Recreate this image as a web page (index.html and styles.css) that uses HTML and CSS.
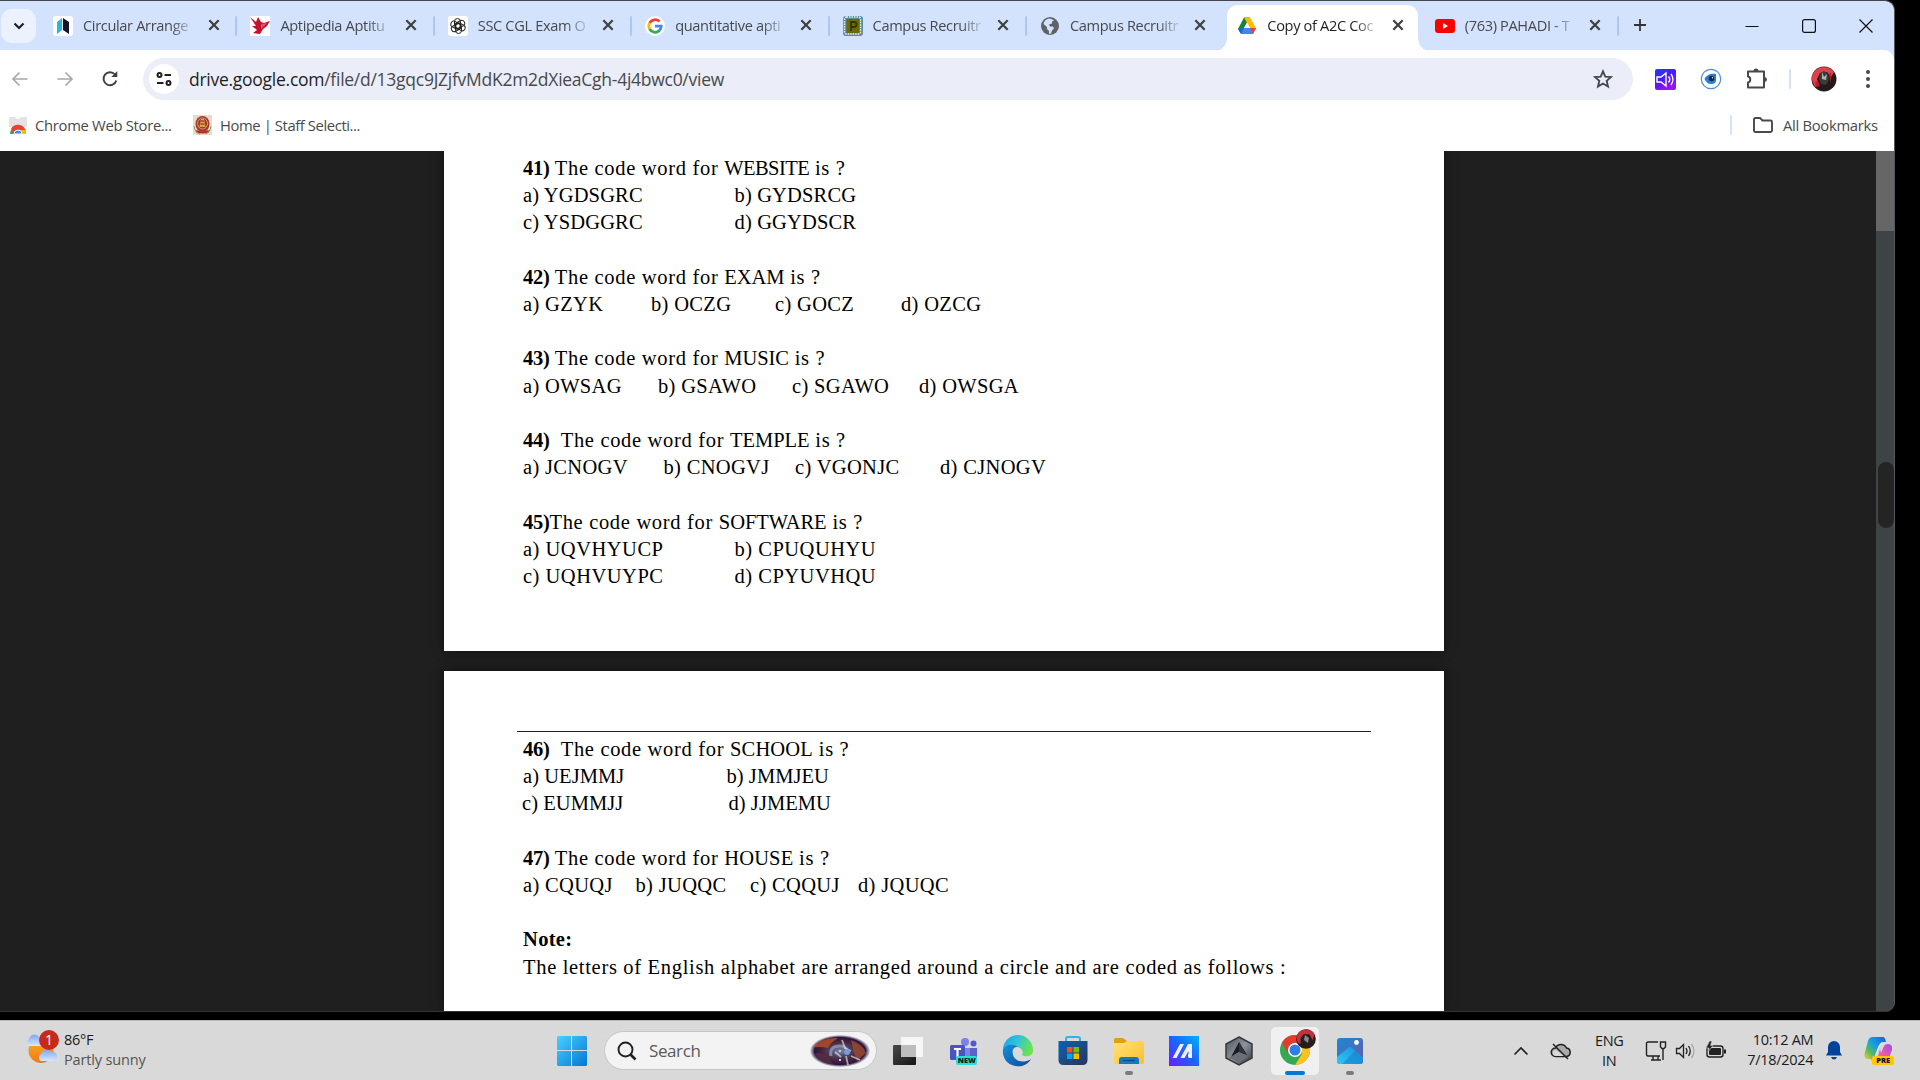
FILE: index.html
```html
<!DOCTYPE html>
<html lang="en">
<head>
<meta charset="utf-8">
<title>Copy of A2C Coding</title>
<link rel="stylesheet" href="styles.css">
</head>
<body>
<svg class="defs" width="0" height="0">
  <defs>
    <symbol id="x" viewBox="0 0 12 12"><path d="M2 2l8 8M10 2l-8 8" stroke="currentColor" stroke-width="1.9" fill="none"/></symbol>
    <linearGradient id="win" x1="0" y1="0" x2="1" y2="1"><stop offset="0" stop-color="#4cd0ff"/><stop offset="1" stop-color="#0078d4"/></linearGradient>
    <linearGradient id="photo" x1="0" y1="0" x2="1" y2="1"><stop offset="0" stop-color="#188ad6"/><stop offset="1" stop-color="#6a58a8"/></linearGradient>
    <linearGradient id="mount" x1="0" y1="1" x2="1" y2="0"><stop offset="0" stop-color="#30c8f4"/><stop offset="1" stop-color="#168ee0"/></linearGradient>
    <linearGradient id="store" x1="0" y1="0" x2="1" y2="1"><stop offset="0" stop-color="#0b62b4"/><stop offset="1" stop-color="#2a3557"/></linearGradient>
    <linearGradient id="asus" x1="0" y1="1" x2="1" y2="0"><stop offset="0" stop-color="#6a1cff"/><stop offset=".5" stop-color="#1c62ff"/><stop offset="1" stop-color="#00b2ff"/></linearGradient>
    <linearGradient id="snd" x1="0" y1="0" x2=".6" y2="1"><stop offset="0" stop-color="#1c3cff"/><stop offset=".5" stop-color="#4a1cf4"/><stop offset="1" stop-color="#a010f4"/></linearGradient>
    <linearGradient id="edgetop" x1="0" y1="0" x2="1" y2=".4"><stop offset="0" stop-color="#1c9fe0"/><stop offset=".5" stop-color="#30c4d8"/><stop offset="1" stop-color="#6ee44a"/></linearGradient>
    <linearGradient id="edgelow" x1="0" y1="0" x2="1" y2="1"><stop offset="0" stop-color="#1590de"/><stop offset="1" stop-color="#0d4a94"/></linearGradient>
    <linearGradient id="fold" x1="0" y1="0" x2="1" y2="1"><stop offset="0" stop-color="#ffe27a"/><stop offset="1" stop-color="#fcbf2a"/></linearGradient>
    <linearGradient id="sun" x1="0" y1="0" x2="0" y2="1"><stop offset="0" stop-color="#f7ae2c"/><stop offset="1" stop-color="#f07a16"/></linearGradient>
    <linearGradient id="cloud" x1="0" y1="0" x2="0" y2="1"><stop offset="0" stop-color="#7ea6ec"/><stop offset="1" stop-color="#d8e8ff"/></linearGradient>
    <linearGradient id="cop1" x1="1" y1="0" x2="0" y2="1"><stop offset="0" stop-color="#1560d8"/><stop offset=".45" stop-color="#16a0e0"/><stop offset=".7" stop-color="#52b868"/><stop offset="1" stop-color="#f4d020"/></linearGradient>
    <linearGradient id="cop2" x1="1" y1="0" x2="0" y2="1"><stop offset="0" stop-color="#a44cf0"/><stop offset=".5" stop-color="#ee58a4"/><stop offset="1" stop-color="#ff9650"/></linearGradient>
    <linearGradient id="dark" x1="0" y1="0" x2="1" y2="1"><stop offset="0" stop-color="#4a4a4a"/><stop offset="1" stop-color="#141414"/></linearGradient>
    <linearGradient id="steel" x1="0" y1="0" x2="1" y2="1"><stop offset="0" stop-color="#4c5158"/><stop offset=".5" stop-color="#8d949c"/><stop offset="1" stop-color="#2e3238"/></linearGradient>
    <radialGradient id="neb"><stop offset="0" stop-color="#7f8fb4"/><stop offset=".3" stop-color="#4c4a6c"/><stop offset=".6" stop-color="#47243a"/><stop offset=".85" stop-color="#2a1540"/><stop offset="1" stop-color="#4a3060" stop-opacity=".1"/></radialGradient>
  </defs>
</svg>

<div class="window">
  <header class="tabstrip">
    <button class="tabsearch"><svg width="12" height="10" viewBox="0 0 12 10"><path d="M1.500 2.500l4.500 4.500 4.500-4.500" fill="none" stroke="#1f1f1f" stroke-width="2.200"/></svg></button>
    <div class="tab"><svg class="fav" viewBox="0 0 20 20"><rect width="20" height="20" rx="3" fill="#fff"/><path d="M4 6l5-4v12l-5 4z" fill="#2bb8d6"/><path d="M10 2l6 4v12l-6-4z" fill="#15152a"/></svg><span class="title">Circular Arrange</span><svg class="close"><use href="#x"/></svg></div>
    <div class="tab"><svg class="fav" viewBox="0 0 20 20"><rect width="20" height="20" fill="#fff"/><path d="M0 1l6 5 2-5 3 5 3 1 6-2-3 5-4 3-3 5-7-1 4-3-5-4 4 0z" fill="#c8102e"/><path d="M11 8l6-1-6 6z" fill="#e0506a"/></svg><span class="title">Aptipedia Aptitu</span><svg class="close"><use href="#x"/></svg></div>
    <div class="tab"><svg class="fav" viewBox="0 0 20 20"><rect width="20" height="20" rx="3" fill="#fff"/><g fill="none" stroke="#222" stroke-width="1"><rect x="6.500" y="2.500" width="6" height="10" rx="3"/><rect x="6.500" y="2.500" width="6" height="10" rx="3" transform="rotate(60 10 10)"/><rect x="6.500" y="2.500" width="6" height="10" rx="3" transform="rotate(120 10 10)"/><rect x="6.500" y="2.500" width="6" height="10" rx="3" transform="rotate(180 10 10)"/><rect x="6.500" y="2.500" width="6" height="10" rx="3" transform="rotate(240 10 10)"/><rect x="6.500" y="2.500" width="6" height="10" rx="3" transform="rotate(300 10 10)"/></g></svg><span class="title">SSC CGL Exam O</span><svg class="close"><use href="#x"/></svg></div>
    <div class="tab"><svg class="fav" viewBox="0 0 20 20"><circle cx="10" cy="10" r="10" fill="#fff"/><g fill="none" stroke-width="2.800"><path d="M14.500 5.600A6.200 6.200 0 0 0 4.600 7" stroke="#ea4335"/><path d="M4.600 7a6.200 6.200 0 0 0 0 6" stroke="#fbbc05"/><path d="M4.600 13a6.200 6.200 0 0 0 9.800 1.500" stroke="#34a853"/><path d="M14.200 14.700c1.500-1.300 2-2.800 2-4.500H10" stroke="#4285f4"/></g></svg><span class="title">quantitative apti</span><svg class="close"><use href="#x"/></svg></div>
    <div class="tab"><svg class="fav" viewBox="0 0 20 20"><rect width="20" height="20" rx="3" fill="#5d8ba0"/><rect x="1.500" y="1" width="16" height="17" rx="2" fill="none" stroke="#e8f4f4" stroke-width="1.500" stroke-dasharray="1.500 1"/><rect x="3.500" y="3" width="13" height="14" fill="#6b6b00"/><path d="M8 15V6h3a2.500 2.500 0 0 1 0 5H8" fill="none" stroke="#343400" stroke-width="1.800"/></svg><span class="title">Campus Recruitr</span><svg class="close"><use href="#x"/></svg></div>
    <div class="tab noline"><svg class="fav" viewBox="0 0 20 20"><circle cx="10" cy="10" r="9" fill="#5f6368"/><path d="M9 2.500c2 0 4 1 5 2l-2 1v2l-3 1 1 2h3l1 2-2 2-1 3-2 .5v-3l-2-2V11L3.500 8C4 5 6 3 9 2.500z" fill="#d3e3fd"/><path d="M3 9l4 4" stroke="#5f6368"/></svg><span class="title">Campus Recruitr</span><svg class="close"><use href="#x"/></svg></div>
    <div class="tab active"><svg class="fav" viewBox="0 0 20 20"><path d="M7 1.500h6l-9 16L1 13z" fill="#188038"/><path d="M7 1.500h6L19 12h-6z" fill="#fcbc00"/><path d="M4.500 12H19l-3 6H4z" fill="#4285f4"/><path d="M19 12l-3 6-3-6z" fill="#ea4335"/><path d="M1 13l3 5 3-6z" fill="#1967d2"/><path d="M10 6.500l3 5.500H7z" fill="#fff"/></svg><span class="title">Copy of A2C Coc</span><svg class="close"><use href="#x"/></svg></div>
    <div class="tab"><svg class="fav" viewBox="0 0 20 20"><rect y="3" width="20" height="14" rx="3" fill="#f00"/><path d="M8 7l5 3-5 3z" fill="#fff"/></svg><span class="title">(763) PAHADI - T</span><svg class="close"><use href="#x"/></svg></div>
    <svg class="newtab" width="14" height="14"><path d="M7 1v12M1 7h12" stroke="#333" stroke-width="1.800"/></svg>
    <div class="controls">
      <svg width="16" height="16"><path d="M1.500 8.500h13" stroke="#111" stroke-width="1.200"/></svg>
      <svg width="16" height="16"><rect x="1.600" y="1.600" width="12.800" height="12.800" rx="2" fill="none" stroke="#111" stroke-width="1.200"/></svg>
      <svg width="16" height="16"><path d="M1.500 1.500l13 13M14.500 1.500l-13 13" stroke="#111" stroke-width="1.200"/></svg>
    </div>
  </header>

  <div class="chrome">
    <nav class="toolbar">
      <svg class="nav" viewBox="0 0 20 20"><path d="M17.500 10H3M9.500 3.500L3 10l6.500 6.500" fill="none" stroke="#a6a8aa" stroke-width="1.700"/></svg>
      <svg class="nav" viewBox="0 0 20 20"><path d="M2.500 10H17M10.500 3.500L17 10l-6.500 6.500" fill="none" stroke="#a6a8aa" stroke-width="1.700"/></svg>
      <svg class="nav" viewBox="0 0 20 20"><path d="M16.300 11.500A6.500 6.500 0 1 1 15 5.500l1 1.500" fill="none" stroke="#3f4042" stroke-width="1.900"/><path d="M17.300 2v6h-6z" fill="#3f4042"/></svg>
      <div class="omnibox">
        <span class="site"><svg width="18" height="16" viewBox="0 0 18 16"><g fill="none" stroke="#1f1f1f" stroke-width="2"><circle cx="4.500" cy="4" r="2"/><path d="M9.500 4h6.500M2 12h6.500"/><circle cx="13.500" cy="12" r="2"/></g></svg></span>
        <span class="url"><b>drive.google.com</b>/file/d/13gqc9JZjfvMdK2m2dXieaCgh-4j4bwc0/view</span>
        <svg class="star" width="20" height="20" viewBox="0 0 20 20"><path d="M10 2.300l2.300 5.300 5.700.5-4.300 3.800 1.300 5.600-5-3-5 3 1.300-5.600L2 8.100l5.700-.5z" fill="none" stroke="#47494c" stroke-width="1.900"/></svg>
      </div>
      <div class="extensions">
        <svg width="21" height="21" viewBox="0 0 21 21"><rect width="21" height="21" rx="2" fill="url(#snd)"/><g fill="none" stroke="#fff" stroke-width="1.400"><path d="M2 8h4l5-4v13l-5-4H2zM13.500 7.500q2.500 3 0 6M16 5q4 5.500 0 11"/></g></svg>
        <svg width="22" height="22" viewBox="0 0 22 22"><circle cx="11" cy="11" r="9.700" fill="#fff" stroke="#4a90e2" stroke-width="1.200"/><path d="M4.500 11C6 7 11 5 16 6v6c0 3-2 4-5 4s-5-2-6.500-5z" fill="#2b7fd6"/><circle cx="11.500" cy="10.500" r="2.800" fill="#14283c"/><circle cx="12.500" cy="9.800" r=".7" fill="#fff"/></svg>
        <svg width="22" height="22" viewBox="0 0 22 22"><path d="M2 3.500h16v16H2v-5c3-.5 3-5.500 0-6z" fill="none" stroke="#47494c" stroke-width="2" stroke-linejoin="round"/><path d="M7.500 3a2.500 2.500 0 0 1 5 0zM18.500 9a2.500 2.500 0 0 1 0 5z" fill="#47494c"/></svg>
      </div>
      <i class="bar"></i>
      <svg class="avatar" width="26" height="26" viewBox="0 0 26 26"><circle cx="13" cy="13" r="12.500" fill="#241a1c"/><path d="M.5 13A12.500 12.500 0 0 1 23 6l-3 5-4-5-7 1-3 6 2 6-4 2z" fill="#e0404a"/><path d="M9 7l4-2 4 3 1 6-3 5-5-1-2-5z" fill="#3a3a3a"/><path d="M11 6l2 5 3-3-1 6-4-1z" fill="#b5b5b5"/><path d="M4 16l3-1 2 5-4 1zM18 9l2-3v11z" fill="#c01c24"/></svg>
      <svg class="menu" width="6" height="20"><g fill="#47494c"><circle cx="3" cy="3" r="2"/><circle cx="3" cy="10" r="2"/><circle cx="3" cy="17" r="2"/></g></svg>
    </nav>
    <nav class="bookmarks">
      <svg width="18" height="17" viewBox="0 0 18 17"><path d="M0 0h18v10H0z" fill="#e3e3e3"/><path d="M6 0q3 4 6 0z" fill="#fff"/><path d="M1 17a8 8 0 0 1 16 0z" fill="#34a853"/><path d="M2 12A8 8 0 0 1 16 12l1 2-8-1-4 2z" fill="#ea4335"/><path d="M12 13h4.500q.8 2 .5 4h-5z" fill="#fbbc04"/><path d="M5 17a4 4 0 0 1 8 0z" fill="#4285f4" stroke="#fff"/></svg>
      <span class="bm one">Chrome Web Store...</span>
      <svg width="19" height="20" viewBox="0 0 19 20"><rect width="19" height="20" fill="#e6dccb"/><ellipse cx="9.500" cy="9" rx="7" ry="8" fill="#a33a2e"/><ellipse cx="9.500" cy="8.500" rx="5" ry="5.500" fill="none" stroke="#e3ab9a" stroke-width=".8"/><path d="M8 4h3l1.500 8h-6z" fill="#d9a441"/><path d="M8 6h3M7.500 9h4" stroke="#8a2318"/><path d="M3 16q6.500 3 13 0" fill="none" stroke="#c02a24" stroke-width="2"/><path d="M1 11q1 7 6 8M18 11q-1 7-6 8" fill="none" stroke="#8f9c5c"/></svg>
      <span class="bm two">Home | Staff Selecti...</span>
      <i class="bar"></i>
      <svg class="folder" width="20" height="16" viewBox="0 0 20 16"><path d="M1 2.500q0-1.500 1.500-1.500H7l2.500 2.500h8q1.500 0 1.500 1.500v8.500q0 1.500-1.500 1.500h-15Q1 15 1 13.500z" fill="none" stroke="#47494c" stroke-width="1.900"/></svg>
      <span class="bm all">All Bookmarks</span>
    </nav>
  </div>

  <main class="viewer">
    <div class="pages">
      <article class="page first">
        <section><p><b>41)</b> The code word for <i class="narrow">WEBSITE</i> is ?</p><div class="opts two"><span>a) YGDSGRC</span><span>b) GYDSRCG</span><span>c) YSDGGRC</span><span>d) GGYDSCR</span></div></section>
        <section><p><b>42)</b> The code word for <i>EXAM</i> is ?</p><div class="opts q42"><span>a) GZYK</span><span>b) OCZG</span><span>c) GOCZ</span><span>d) OZCG</span></div></section>
        <section><p><b>43)</b> The code word for <i>MUSIC</i> is ?</p><div class="opts q43"><span>a) OWSAG</span><span>b) GSAWO</span><span>c) SGAWO</span><span>d) OWSGA</span></div></section>
        <section><p><b>44)</b>&nbsp; The code word for <i>TEMPLE</i> is ?</p><div class="opts q44"><span>a) JCNOGV</span><span>b) CNOGVJ</span><span>c) VGONJC</span><span>d) CJNOGV</span></div></section>
        <section><p><b>45)</b>The code word for <i>SOFTWARE</i> is ?</p><div class="opts two wide"><span>a) UQVHYUCP</span><span>b) CPUQUHYU</span><span>c) UQHVUYPC</span><span>d) CPYUVHQU</span></div></section>
      </article>
      <article class="page second">
        <hr>
        <section><p><b>46)</b>&nbsp; The code word for <i class="loose">SCHOOL</i> is ?</p><div class="opts q46"><span>a) UEJMMJ</span><span>b) JMMJEU</span></div><div class="opts q46b"><span>c) EUMMJJ</span><span>d) JJMEMU</span></div></section>
        <section><p><b>47)</b> The code word for <i class="loose">HOUSE</i> is ?</p><div class="opts q47"><span>a) CQUQJ</span><span>b) JUQQC</span><span>c) CQQUJ</span><span>d) JQUQC</span></div></section>
        <section><p><b class="note">Note:</b></p><p>The letters of English alphabet are arranged around a circle and are coded as follows :</p></section>
      </article>
    </div>
    <div class="scroll"><i class="upper"></i><i class="thumb"></i></div>
  </main>
</div>

<footer class="taskbar">
  <div class="weather">
    <svg width="34" height="36" viewBox="0 0 34 36"><circle cx="16" cy="20.500" r="12.500" fill="url(#sun)"/><path d="M4 16a4 4 0 0 1 0-7 5.500 5.500 0 0 1 10-2 4.500 4.500 0 0 1 3 9z" fill="url(#cloud)"/><path d="M16 31a4 4 0 0 1 0-7 5.500 5.500 0 0 1 10-2 4.500 4.500 0 0 1 3 9z" fill="url(#cloud)"/></svg>
    <span class="badge">1</span>
    <div class="wtext"><span>86°F</span><small>Partly sunny</small></div>
  </div>
  <svg class="start" width="30" height="30" viewBox="0 0 30 30"><path d="M1 0h13v14H0V1zM15 0h14l1 1v13H15zM0 15h14v15H1l-1-1zM15 15h15v14l-1 1H15z" fill="url(#win)"/></svg>
  <div class="search">
    <svg width="20" height="20" viewBox="0 0 20 20"><circle cx="8.500" cy="8.500" r="7" fill="none" stroke="#222" stroke-width="1.900"/><path d="M13.500 13.500l5 5" stroke="#222" stroke-width="2.600"/></svg>
    <span>Search</span>
    <svg class="nebula" width="62" height="34" viewBox="0 0 62 34"><ellipse cx="31" cy="17" rx="30" ry="16" fill="url(#neb)"/><path d="M3 14Q13 3 29 4q-9 6-10 10Q10 12 3 14z" fill="#b34d27" opacity=".85"/><path d="M42 6q12 4 15 13l-9 8-3-8z" fill="#a8522c" opacity=".7"/><path d="M5 20q8-3 14 3l5 7q-12 0-19-10z" fill="#5a3040" opacity=".8"/><path d="M22 22q-2-10 9-10 5 0 7 4" fill="none" stroke="#a9a3b8" stroke-width="3" opacity=".7"/><path d="M33 6l3 8 6 3M37 22l2 9M42 22l9 4M26 18l6 5" fill="none" stroke="#dfe5f0" stroke-width="1.800" opacity=".65"/><circle cx="38" cy="18" r="3" fill="#789bd6"/><circle cx="31" cy="26" r="1" fill="#fff"/><circle cx="31" cy="17" r="1" fill="#ffd9a0"/></svg>
  </div>
  <div class="apps">
    <span class="app"><svg width="32" height="32" viewBox="0 0 32 32"><rect x="1" y="10" width="23" height="20" rx="1" fill="url(#dark)"/><rect x="9" y="2" width="22" height="20" rx="1" fill="#fff" opacity=".78"/><rect x="9" y="10" width="15" height="12" fill="#bdbdbd"/></svg></span>
    <span class="app teams"><svg width="30" height="30" viewBox="0 0 30 30"><circle cx="17" cy="6" r="4" fill="#7b83eb"/><circle cx="25.500" cy="7.500" r="3" fill="#5059c9"/><path d="M18 12h11v9q0 3-5 3h-6z" fill="#5b62cc"/><path d="M9 12h13v13H9z" fill="#7b83eb"/><rect x="2" y="9" width="15" height="15" rx="1.500" fill="#4b53bc"/><path d="M6 13h7M9.500 13v8" stroke="#fff" stroke-width="2.200"/></svg><em>NEW</em></span>
    <span class="app"><svg width="32" height="32" viewBox="0 0 32 32"><path d="M1 16a15 15 0 0 1 30-2c1 7-7 9-11 6 2-3 0-8-6-8-7 0-11 7-8 13-3-2-5-5-5-9z" fill="url(#edgetop)"/><path d="M1 15c2-5 9-7 15-3-5 0-6 3-5 8 2 6 10 9 18 4-4 7-12 9-19 6-6-2-10-9-9-15z" fill="url(#edgelow)"/></svg></span>
    <span class="app"><svg width="32" height="32" viewBox="0 0 32 32"><path d="M9 7V4q0-2 2-2h10q2 0 2 2v3" fill="none" stroke="#28b8ee" stroke-width="2"/><path d="M1.500 6h29v19q0 5-5 5h-19q-5 0-5-5z" fill="url(#store)"/><path d="M10 12h5.500v5.500H10z" fill="#f25022"/><path d="M16.500 12H22v5.500h-5.500z" fill="#7fba00"/><path d="M10 18.500h5.500V24H10z" fill="#00a4ef"/><path d="M16.500 18.500H22V24h-5.500z" fill="#ffb900"/></svg></span>
    <span class="app run"><svg width="32" height="32" viewBox="0 0 32 32"><path d="M1 5q0-2 2-2h7l4 3h11v8H1z" fill="#e0a008"/><path d="M1 8h10l3-2h15q2 0 2 2v19q0 2-2 2H3q-2 0-2-2z" fill="url(#fold)"/><path d="M6 29v-4q0-3 3-3h14q3 0 3 3v4z" fill="#1478c8"/><path d="M10 25.500h12" stroke="#0a4a84" stroke-width="1.200"/></svg></span>
    <span class="app"><svg width="32" height="32" viewBox="0 0 32 32"><rect x="1" y="1" width="30" height="30" fill="url(#asus)"/><path d="M4.500 23L12 9h4L8.500 23zM12.500 23L20 9h4v14h-3.500v-7l-4 7z" fill="#eef"/><circle cx="21.500" cy="20.500" r="1.500" fill="#fff"/></svg></span>
    <span class="app"><svg width="32" height="32" viewBox="0 0 32 32"><path d="M16 2l13 7v14l-13 7-13-7V9z" fill="url(#steel)" stroke="#34383e" stroke-width="1.500"/><path d="M16 7l8 13-8-3-8 5z" fill="#1b1d22"/><path d="M6 23l10-6 9 4-9 6z" fill="#6b7076"/><path d="M16 7v10l8 3z" fill="#30343a"/></svg></span>
    <span class="app current"><svg width="38" height="38" viewBox="0 0 38 38"><circle cx="17" cy="22" r="15" fill="#34a853"/><path d="M4 14.500A15 15 0 0 1 30 14.500H17l-7 11z" fill="#e33b2e"/><path d="M30 14.500A15 15 0 0 1 17 37l7-11-2-11.500z" fill="#fcc31e"/><circle cx="17" cy="22" r="7" fill="#fff"/><circle cx="17" cy="22" r="5.500" fill="#2f7de8"/><circle cx="28" cy="11" r="9.800" fill="#271b1e"/><path d="M18.500 9A9.800 9.800 0 0 1 36.500 6.200l-2 6-3-6-6 0-3 4 0 6-3-2z" fill="#c2323c"/><path d="M27 7l4 3-1 5-4-3z" fill="#888"/></svg></span>
    <span class="app run"><svg width="28" height="28" viewBox="0 0 28 28"><rect x="1" y="1" width="26" height="26" rx="3" fill="url(#photo)"/><path d="M1 20l11-9q2-2 4 0l11 10v3q0 3-3 3H4q-3 0-3-3z" fill="url(#mount)"/><path d="M6 27l10-10 3-3 8 8v2q0 3-3 3z" fill="#1482cc" opacity=".6"/><circle cx="20.500" cy="5.500" r="2.400" fill="#fff"/></svg></span>
  </div>
  <div class="tray">
    <svg class="chev" width="16" height="10"><path d="M1.500 8.500L8 2l6.500 6.500" fill="none" stroke="#222" stroke-width="1.600"/></svg>
    <svg class="cloud" width="22" height="20" viewBox="0 0 22 20"><path d="M5.500 15.500a4.200 4.200 0 0 1 0-8.500 6 6 0 0 1 11 0 4.300 4.300 0 0 1 0 8.500z" fill="#aaa" stroke="#222" stroke-width="1.500"/><path d="M6 9l8 6H6a3 3 0 0 1 0-6z" fill="#d9d9d9"/><path d="M3 3l15 15" stroke="#222" stroke-width="1.500"/></svg>
    <div class="lang"><span>ENG</span><span>IN</span></div>
    <svg class="net" width="22" height="22" viewBox="0 0 22 22"><path d="M13 2H3Q1.500 2 1.500 3.500v11Q1.500 16 3 16h12M6 20h10M8 16v4M13 16v4M18 8v12" fill="none" stroke="#222" stroke-width="1.400"/><path d="M15.500 2h5v5l-1.500 1.500h-2L15.500 7z" fill="#d9d9d9" stroke="#222" stroke-width="1.400"/></svg>
    <svg class="vol" width="22" height="20" viewBox="0 0 22 20"><path d="M1.500 7.500h3l4-4v13l-4-4h-3z" fill="none" stroke="#222" stroke-width="1.300"/><path d="M11 7q2 3 0 6M13.500 5q3.500 5 0 10" fill="none" stroke="#222" stroke-width="1.300"/><path d="M16.500 3q5 7 0 14" fill="none" stroke="#aaa" stroke-width="1.300"/></svg>
    <svg class="bat" width="22" height="20" viewBox="0 0 22 20"><rect x="2" y="5" width="16" height="11" rx="2.500" fill="none" stroke="#222" stroke-width="1.400"/><rect x="4" y="7" width="12" height="7" rx="1" fill="#222"/><path d="M19 8.500h2v4h-2z" fill="#222"/><path d="M4.500 0L1 7h3l-1 4 5-6.500H5.500L7 0z" fill="#222" stroke="#d9d9d9" stroke-width=".6"/></svg>
    <div class="clock"><span>10:12 AM</span><span>7/18/2024</span></div>
    <svg class="bell" width="18" height="20" viewBox="0 0 18 20"><path d="M9 1a6 6 0 0 1 6 6v5l2 3.500H1L3 12V7a6 6 0 0 1 6-6z" fill="#00439b"/><path d="M6 17h6q-1 2.500-3 2.500T6 17z" fill="#00439b"/></svg>
    <div class="copilot"><svg width="30" height="30" viewBox="0 0 30 30"><path d="M9 1h10q2 0 3 5h-3q-3 0-4 4l-3 10q-1 3-4 3H4q-5 0-3-7L4 5q1-4 5-4z" fill="url(#cop1)"/><path d="M17 17l3-7q1-2 4-2 5 0 4 6l-3 8q-1 4-5 4H9q-1 0-2-3h3q3 0 4-3l2-7z" fill="url(#cop2)"/><path d="M19 8q-4 0-5 5l-3 8" stroke="#e8e8e8" stroke-width="1.200" fill="none"/></svg><em>PRE</em></div>
  </div>
</footer>
</body>
</html>
```
FILE: styles.css
```css
* { box-sizing: border-box; }
body { margin: 0; width: 1920px; height: 1080px; overflow: hidden; background: #000; font-family: "Open Sans", "Noto Sans", sans-serif; color: #3c4043; }
svg { flex: none; display: block; }
.defs { position: absolute; }
span, small, em, p { white-space: nowrap; }

.window { width: 1895px; height: 1012px; margin-bottom: 8px; background: #d3e3fd; border-top: 1px solid #45464c; border-right: 1px solid #55595e; border-radius: 0 10px 10px 0; overflow: hidden; display: flex; flex-direction: column; }

.tabstrip { height: 49px; display: flex; align-items: center; flex: none; }
.tabsearch { width: 35px; height: 34px; margin: 0 4px 0 1px; padding: 0; border: 0; border-radius: 11px; background: #ebf2fe; display: flex; align-items: center; justify-content: center; }
.tab { width: 197.4px; height: 42px; flex: none; display: flex; align-items: center; padding-left: 13px; position: relative; }
.tab::after { content: ""; position: absolute; right: 0; top: 11px; width: 2px; height: 20px; border-radius: 1px; background: #a8c7fa; }
.fav { width: 20px; height: 20px; }
.title { width: 112px; margin: -2px 0 0 10px; font-size: 14.600px; letter-spacing: -.35px; line-height: 22px; color: #47494c; -webkit-mask-image: linear-gradient(90deg, #000 78%, transparent 101%); mask-image: linear-gradient(90deg, #000 78%, transparent 101%); }
.close { width: 14px; height: 14px; margin: -1px 0 0 11.500px; color: #3d3f42; }
.tab.noline::after { display: none; }
.tab.active::after { left: 3px; right: auto; top: 0; width: 191px; height: 48px; border-radius: 11px 11px 0 0; background: #fff; z-index: 0; }
.tab.active::before { content: ""; position: absolute; left: -9px; bottom: -4px; width: 215px; height: 12px; background: radial-gradient(circle at 0 0, transparent 11.500px, #fff 12px) 0 0 / 12px 12px no-repeat, radial-gradient(circle at 100% 0, transparent 11.500px, #fff 12px) 100% 0 / 12px 12px no-repeat; }
.tab.active > * { position: relative; z-index: 1; }
.tab.active .title { color: #1f1f1f; }
.newtab { margin: -1px 0 0 14px; }
.controls { margin-left: auto; margin-right: 20px; display: flex; gap: 41px; }

.chrome { height: 101px; flex: none; background: #fff; border-radius: 0 10px 0 0; }
.toolbar { height: 58px; display: flex; align-items: center; padding-left: 10px; }
.nav { width: 20px; height: 20px; margin-right: 25px; }
.nav + .nav + .nav { margin-right: 23px; }
.omnibox { width: 1490px; height: 42px; border-radius: 21px; background: #ebeef8; display: flex; align-items: center; padding: 0 20px 0 6px; }
.site { width: 30px; height: 30px; border-radius: 50%; background: #fff; display: flex; align-items: center; justify-content: center; }
.url { margin-left: 10px; font-size: 17.500px; line-height: 24px; letter-spacing: -.265px; color: #47494c; }
.url b { font-weight: 400; color: #1f1f1f; }
.star { margin-left: auto; }
.extensions { display: flex; align-items: center; gap: 24px; margin-left: 22px; }
.bar { width: 2px; height: 20px; border-radius: 1px; background: #d3e3fd; }
.toolbar .bar { margin-left: 21px; }
.avatar { margin-left: 20px; }
.menu { margin-left: 28px; }
.bookmarks { height: 34px; display: flex; align-items: center; padding-left: 9px; }
.bm { font-size: 14.800px; line-height: 22px; color: #47494c; letter-spacing: -.3px; }
.bm.one { width: 166px; padding-left: 8px; }
.bm.two { padding-left: 8px; letter-spacing: -.4px; }
.bookmarks .bar { margin-left: auto; margin-right: 21px; }
.bm.all { width: 121px; padding-left: 10px; }

.viewer { height: 861px; flex: none; background: #1f1f1f; display: flex; border-bottom: 1px solid #333; overflow: hidden; }
.pages { width: 1876px; padding-left: 444px; }
.page { width: 1000px; padding-left: 79px; background: #fff; box-shadow: 0 0 10px #111; color: #000; font: 20.500px/27.250px "Liberation Serif", serif; letter-spacing: .33px; overflow: hidden; }
.page p { margin: 0; letter-spacing: .68px; }
.page p b { letter-spacing: -.3px; }
.page p .note { letter-spacing: .33px; }
.page p i { font-style: normal; letter-spacing: -.05px; }
.page p .narrow { letter-spacing: -.55px; }
.page p .loose { letter-spacing: .15px; }
.page section { margin-bottom: 27.250px; }
.first { height: 500px; padding-top: 3.700px; margin-bottom: 20px; }
.second { height: 340px; padding-top: 60px; }
.page hr { width: 854px; height: 1px; margin: 0 0 3.700px -6px; border: 0; background: #222; }
.opts { display: grid; }
.opts.two { grid-template-columns: 211.500px 200px; letter-spacing: .15px; }
.opts.two.wide { letter-spacing: .5px; }
.q42 { grid-template-columns: 128px 124px 126px 120px; }
.q43 { grid-template-columns: 135px 134px 127px 120px; }
.q44 { grid-template-columns: 140.500px 131.500px 145px 120px; }
.q46 { grid-template-columns: 203.500px 200px; letter-spacing: .05px; }
.q46b { grid-template-columns: 206.500px 200px; margin-left: -1px; letter-spacing: .05px; }
.q47 { grid-template-columns: 112.500px 114.500px 108px 120px; }

.scroll { width: 18px; background: #3e4346; }
.scroll i { display: block; }
.upper { height: 80px; background: #666; }
.thumb { width: 16px; height: 66px; margin: 231px 0 0 2px; border-radius: 8px; background: #242424; }

.taskbar { height: 60px; background: #d9d9d9; border-top: 1px solid #b9b9b9; display: flex; align-items: center; color: #1b1b1b; }
.weather { width: 557px; display: flex; padding-left: 25px; position: relative; align-items: center; }
.weather svg { margin: -6px 5px 0 0; }
.badge { position: absolute; left: 39px; top: -2px; width: 20px; height: 20px; border-radius: 50%; background: #c42b1c; color: #fff; font-size: 14px; line-height: 20px; text-align: center; }
.wtext, .lang, .clock { display: flex; flex-direction: column; font-size: 14.500px; line-height: 20px; letter-spacing: -.3px; }
.wtext { margin-top: -2px; }
.wtext small { font-size: 14.500px; color: #555; letter-spacing: -.15px; }
.start { margin-right: 17px; }
.search { width: 273px; height: 39px; border-radius: 20px; background: #f3f3f3; border: 1px solid #c6c6c6; display: flex; align-items: center; padding: 0 5px 0 12px; font-size: 17px; color: #5a5a5a; }
.search span { margin-left: 12px; letter-spacing: -.4px; }
.nebula { margin-left: auto; }
.apps { display: flex; margin-left: 3px; }
.app { width: 55.250px; height: 48px; display: flex; align-items: center; justify-content: center; position: relative; }
.teams em { position: absolute; left: 21px; top: 29px; width: 21px; height: 9px; border-radius: 2px; background: #22e2dc; color: #111; font: 800 7.500px/9px "Open Sans", sans-serif; text-align: center; }
.run::after, .current::after { content: ""; position: absolute; left: 24px; bottom: 0; width: 8px; height: 4px; border-radius: 2px; background: #7c7c7c; }
.current::before { content: ""; position: absolute; left: 4px; top: 0; width: 48px; height: 48px; border-radius: 5px; background: #f0f0f0; }
.current::after { left: 18px; width: 20px; background: #0078d4; }
.current svg { position: relative; margin: -8px 0 0 5px; }
.tray { display: flex; align-items: center; margin-left: 136px; }
.cloud { margin-left: 21px; }
.lang { width: 50px; margin-left: 12px; align-items: center; }
.net { margin-left: 11px; }
.vol { margin-left: 8px; }
.bat { margin-left: 8px; }
.clock { width: 86px; margin-top: -2px; align-items: flex-end; }
.bell { margin-left: 12px; margin-top: -2px; }
.copilot { position: relative; margin-left: 21px; }
.copilot em { position: absolute; left: 8px; top: 20px; width: 22px; height: 9px; border-radius: 2px; background: #ffc800; color: #111; font: 800 7.500px/9px "Open Sans", sans-serif; text-align: center; }
```
